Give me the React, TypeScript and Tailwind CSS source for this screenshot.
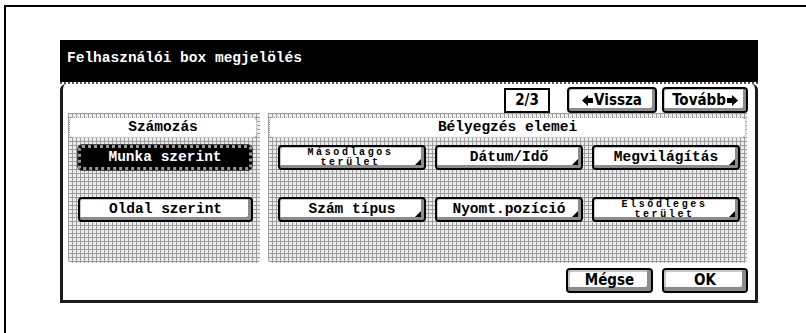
import React from "react";

const mono = "font-['Liberation_Mono',monospace] font-bold";
const cond = "font-['DejaVu_Sans_Condensed','DejaVu_Sans',sans-serif] font-stretch-condensed font-bold";

function Corner() {
  return (
    <svg className="absolute right-[3px] bottom-[3px]" width="6" height="6" viewBox="0 0 6 6">
      <polygon points="6,0 6,6 0,6" fill="#000" />
    </svg>
  );
}

function Btn({
  children,
  menu = false,
  active = false,
  className = "",
}: {
  children: React.ReactNode;
  menu?: boolean;
  active?: boolean;
  className?: string;
}) {
  if (active)
    return (
      <div
        className={`relative flex h-[25px] items-center justify-center rounded-[4px] border-[3px] border-dotted border-[#9a9a9a] bg-black text-white outline outline-1 outline-[#444] ${className}`}
      >
        {children}
      </div>
    );
  return (
    <div
      className={`relative flex h-[25px] items-center justify-center rounded-[4px] border-2 border-black bg-white shadow-[inset_-3px_-3px_0_#8c8c8c,inset_1px_1px_0_#c8c8c8] ${className}`}
    >
      {children}
      {menu && <Corner />}
    </div>
  );
}

function Small({ a, b }: { a: string; b: string }) {
  return (
    <span className="flex flex-col items-center pr-[3px] text-[10px] leading-[10px] tracking-[2.6px]">
      <span>{a}</span>
      <span>{b}</span>
    </span>
  );
}

function ArrowLeft() {
  return (
    <svg width="11" height="11" viewBox="0 0 11 11" className="mr-[1px]">
      <polygon points="0,5.5 6,0 6,3 11,3 11,8 6,8 6,11" fill="#000" />
    </svg>
  );
}

function ArrowRight() {
  return (
    <svg width="11" height="11" viewBox="0 0 11 11" className="ml-[1px]">
      <polygon points="11,5.5 5,0 5,3 0,3 0,8 5,8 5,11" fill="#000" />
    </svg>
  );
}

const grid =
  "bg-[#ececec] bg-[image:linear-gradient(90deg,#9c9c9c_1px,transparent_1px),linear-gradient(#9c9c9c_1px,transparent_1px)] bg-[size:4px_4px]";

export default function App() {
  return (
    <div className="h-[333px] w-[806px] overflow-hidden bg-white text-black">
      <div className="ml-[4px] mt-[5px] h-[328px] w-[802px] border-l-2 border-t-2 border-black pl-[54px] pt-[33px]">
        <div className="flex h-[263px] w-[698px] flex-col">
          <div className="h-[42px] bg-black pl-[7px] pt-[4px]">
            <span className="font-['Liberation_Mono',monospace] text-[14.5px] font-semibold leading-[17px] text-white">
              Felhasználói box megjelölés
            </span>
          </div>
          <div className="h-[2px] border-b-2 border-dotted border-[#555] bg-white" />
          <div className="flex flex-1 flex-col rounded-t-[6px] border-x-[3px] border-b-[3px] border-[#1c1c1c] bg-white pt-[3px]">
            <div className="flex h-[26px] items-center justify-end pr-[7px]">
              <div className={`mr-[17px] flex h-[25px] w-[46px] items-center justify-center border-2 border-black bg-white text-[15px] ${cond}`}>
                2/3
              </div>
              <Btn className={`mr-[5px] h-[26px] w-[90px] text-[15px] ${cond}`}>
                <ArrowLeft />
                Vissza
              </Btn>
              <Btn className={`h-[26px] w-[86px] text-[15px] ${cond}`}>
                Tovább
                <ArrowRight />
              </Btn>
            </div>

            <div className="flex h-[150px] gap-[8px] pl-[5px] pr-[8px]">
              <div className={`flex w-[192px] flex-col rounded-b-[4px] ${grid}`}>
                <div className={`mx-[1px] mr-[3px] mt-[4px] flex h-[21px] items-center justify-center rounded-[5px] border border-dotted border-[#999] bg-white text-[14.5px] ${mono}`}>
                  Számozás
                </div>
                <Btn active className={`ml-[10px] mr-[8px] mt-[7px] text-[14.5px] ${mono}`}>
                  Munka szerint
                </Btn>
                <Btn className={`ml-[10px] mr-[7px] mt-[27px] text-[14.5px] ${mono}`}>
                  Oldal szerint
                </Btn>
              </div>

              <div className={`flex flex-1 flex-col rounded-b-[4px] ${grid}`}>
                <div className={`mx-[1px] mt-[4px] flex h-[21px] items-center justify-center rounded-[5px] border border-dotted border-[#999] bg-white text-[14.5px] ${mono}`}>
                  Bélyegzés elemei
                </div>
                <div className={`ml-[10px] mr-[7px] mt-[7px] grid grid-cols-3 gap-x-[9px] gap-y-[27px] text-[14.5px] ${mono}`}>
                  <Btn menu>
                    <Small a="Másodlagos" b="terület" />
                  </Btn>
                  <Btn menu>Dátum/Idő</Btn>
                  <Btn menu>Megvilágítás</Btn>
                  <Btn menu>Szám típus</Btn>
                  <Btn menu>Nyomt.pozíció</Btn>
                  <Btn menu>
                    <Small a="Elsődleges" b="terület" />
                  </Btn>
                </div>
              </div>
            </div>

            <div className="mt-[5px] flex h-[25px] justify-end pr-[7px]">
              <Btn className={`mr-[9px] w-[87px] shadow-[inset_-4px_-4px_0_#8c8c8c,inset_2px_2px_0_#c8c8c8] text-[15px] ${cond}`}>
                Mégse
              </Btn>
              <Btn className={`w-[86px] shadow-[inset_-4px_-4px_0_#8c8c8c,inset_2px_2px_0_#c8c8c8] text-[15px] ${cond}`}>
                OK
              </Btn>
            </div>
          </div>
        </div>
      </div>
    </div>
  );
}
